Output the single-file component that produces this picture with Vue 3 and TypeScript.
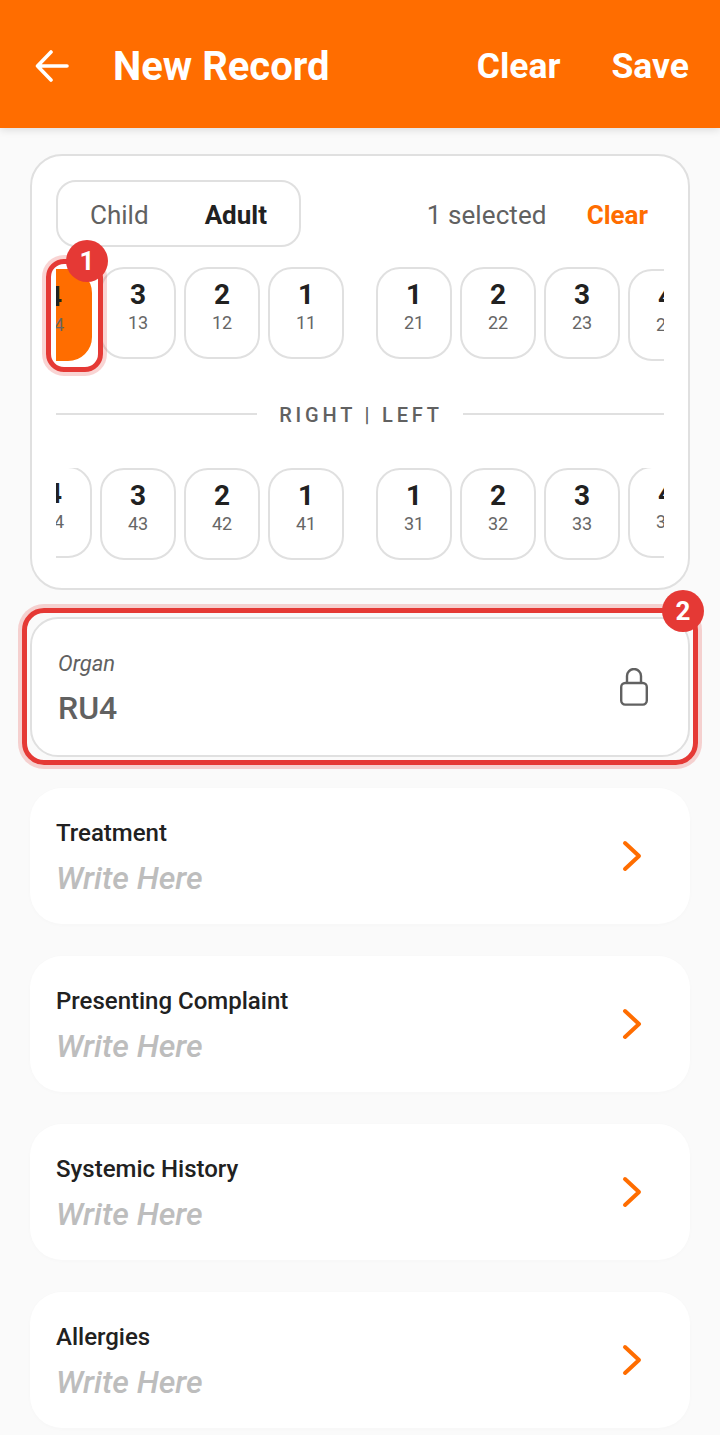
<template>
  <div class="page">
    <header class="app-bar">
      <button type="button" class="back" aria-label="Back">
        <svg width="34" height="34" viewBox="0 0 34 34" fill="none" stroke="#fff" stroke-width="3.6" stroke-linecap="round" stroke-linejoin="round">
          <path d="M32 17H2.5M16 3 2.5 17 16 31" />
        </svg>
      </button>
      <h1 class="title">New Record</h1>
      <span class="bar-action">Clear</span>
      <span class="bar-action save">Save</span>
    </header>

    <main class="content">
      <section class="chart-card">
        <div class="chart-top">
          <div class="toggle">
            <span class="toggle-item">Child</span>
            <span class="toggle-item active">Adult</span>
          </div>
          <span class="selected-count">1 selected</span>
          <span class="clear-link">Clear</span>
        </div>

        <div class="teeth-window upper">
          <div class="teeth-row">
            <template v-for="(quadrant, q) in upperTeeth" :key="q">
              <div class="quadrant">
                <div
                  v-for="tooth in quadrant"
                  :key="tooth.code"
                  class="tooth"
                  :class="{ selected: tooth.code === 14, far: tooth.num === 4 }"
                >
                  <span class="tooth-num">{{ tooth.num }}</span>
                  <span class="tooth-code">{{ tooth.code }}</span>
                </div>
              </div>
            </template>
          </div>
        </div>

        <div class="divider">
          <span class="line"></span>
          <span class="divider-text">RIGHT | LEFT</span>
          <span class="line"></span>
        </div>

        <div class="teeth-window lower">
          <div class="teeth-row">
            <template v-for="(quadrant, q) in lowerTeeth" :key="q">
              <div class="quadrant">
                <div
                  v-for="tooth in quadrant"
                  :key="tooth.code"
                  class="tooth"
                  :class="{ far: tooth.num === 4 }"
                >
                  <span class="tooth-num">{{ tooth.num }}</span>
                  <span class="tooth-code">{{ tooth.code }}</span>
                </div>
              </div>
            </template>
          </div>
        </div>

        <div class="mark mark-tooth">
          <span class="badge badge-tooth">1</span>
        </div>
      </section>

      <div class="organ-wrap">
        <div class="organ-card">
          <div class="organ-text">
            <span class="organ-label">Organ</span>
            <span class="organ-value">RU4</span>
          </div>
          <svg class="lock" width="28" height="38" viewBox="0 0 28 38" fill="none" stroke="#616161" stroke-width="2.4" stroke-linejoin="round">
            <rect x="1.2" y="15" width="25.6" height="21.6" rx="4" />
            <path d="M7 15V8a7 7 0 0 1 14 0v7" />
          </svg>
        </div>
        <div class="mark mark-organ">
          <span class="badge badge-organ">2</span>
        </div>
      </div>

      <div v-for="field in fields" :key="field" class="field-card">
        <div class="field-text">
          <span class="field-label">{{ field }}</span>
          <span class="field-hint">Write Here</span>
        </div>
        <svg class="chevron" width="22" height="34" viewBox="0 0 22 34" fill="none" stroke="#ff6d00" stroke-width="4" stroke-linecap="round" stroke-linejoin="round">
          <path d="M4 4 18 17 4 30" />
        </svg>
      </div>
    </main>
  </div>
</template>

<script setup lang="ts">
interface Tooth {
  num: number
  code: number
}

const makeQuadrant = (prefix: number, nums: number[]): Tooth[] =>
  nums.map((num) => ({ num, code: prefix * 10 + num }))

const upperTeeth: Tooth[][] = [
  makeQuadrant(1, [4, 3, 2, 1]),
  makeQuadrant(2, [1, 2, 3, 4])
]

const lowerTeeth: Tooth[][] = [
  makeQuadrant(4, [4, 3, 2, 1]),
  makeQuadrant(3, [1, 2, 3, 4])
]

const fields = ['Treatment', 'Presenting Complaint', 'Systemic History', 'Allergies']
</script>

<style>
html,
body {
  margin: 0;
  background: #fafafa;
}
</style>

<style scoped>
.page {
  height: 1435px;
  overflow: hidden;
  background: #fafafa;
  font-family: Roboto, "Liberation Sans", sans-serif;
  color: #212121;
}

.app-bar {
  height: 128px;
  box-sizing: border-box;
  display: flex;
  align-items: center;
  padding: 4px 31px 0 35px;
  background: #ff6d00;
  box-shadow: 0 2px 8px rgba(0, 0, 0, 0.12);
  color: #fff;
}

.back {
  display: flex;
  padding: 0;
  border: none;
  background: none;
  margin-right: 44px;
}

.title {
  flex: 1;
  margin: 0;
  font-size: 40px;
  font-weight: 700;
}

.bar-action {
  font-size: 35.5px;
  font-weight: 700;
}

.save {
  margin-left: 51px;
}

.content {
  padding: 26px 30px 0;
}

.chart-card {
  position: relative;
  box-sizing: border-box;
  height: 436px;
  padding: 24px;
  background: #fff;
  border: 2px solid #e0e0e0;
  border-radius: 32px;
}

.chart-top {
  display: flex;
  align-items: center;
  height: 67px;
}

.toggle {
  box-sizing: border-box;
  width: 245px;
  height: 67px;
  display: flex;
  align-items: center;
  justify-content: space-between;
  padding: 2px 32px 0 32px;
  border: 2px solid #e0e0e0;
  border-radius: 20px;
}

.toggle-item {
  font-size: 26px;
  color: #616161;
}

.toggle-item.active {
  font-weight: 700;
  color: #212121;
}

.selected-count {
  margin-left: auto;
  padding-top: 2px;
  font-size: 26px;
  letter-spacing: 0.1px;
  color: #616161;
}

.clear-link {
  margin-left: 40px;
  margin-right: 16px;
  padding-top: 2px;
  font-size: 26px;
  font-weight: 700;
  color: #ff6d00;
}

.teeth-window {
  overflow: hidden;
  height: 96px;
}

.teeth-window.upper {
  margin-top: 20px;
}

.teeth-row {
  display: flex;
  gap: 32px;
  margin-left: -40px;
  width: max-content;
}

.quadrant {
  display: flex;
  gap: 8px;
}

.tooth {
  box-sizing: border-box;
  width: 76px;
  height: 92px;
  display: flex;
  flex-direction: column;
  align-items: center;
  padding-top: 10px;
  border: 2px solid #e0e0e0;
  border-radius: 24px;
  background: #fff;
}

.upper .far {
  margin-top: 2px;
}

.lower .teeth-row {
  align-items: flex-start;
}

.tooth.selected {
  background: #ff6d00;
  border-color: #ff6d00;
}

.tooth-num {
  font-size: 28px;
  line-height: 32px;
  font-weight: 700;
}

.tooth-code {
  margin-top: 1px;
  font-size: 18px;
  line-height: 22px;
  color: #666;
}

.divider {
  display: flex;
  align-items: center;
  gap: 20px;
  height: 24px;
  margin-top: 40px;
  margin-bottom: 41px;
}

.line {
  flex: 1;
  height: 2px;
  margin-top: -2px;
  background: #e0e0e0;
}

.divider-text {
  padding-left: 2px;
  font-size: 20px;
  font-weight: 500;
  letter-spacing: 3.8px;
  color: #616161;
}

.lower .far {
  margin-top: -2px;
}

.mark {
  position: absolute;
  box-sizing: border-box;
  border: 5px solid #e53935;
  box-shadow: 0 0 0 4px rgba(229, 57, 53, 0.22);
  pointer-events: none;
}

.mark-tooth {
  left: 14px;
  top: 103px;
  width: 57px;
  height: 113px;
  border-radius: 18px;
}

.mark-organ {
  inset: -9px -8px -8px -8px;
  border-radius: 22px;
}

.badge {
  position: absolute;
  width: 42px;
  height: 42px;
  display: flex;
  align-items: center;
  justify-content: center;
  border-radius: 50%;
  background: #e53935;
  color: #fff;
  font-size: 26px;
  font-weight: 700;
}

.badge-tooth {
  top: -24px;
  right: -10px;
}

.badge-organ {
  top: -23px;
  right: -11px;
}

.organ-wrap {
  position: relative;
  margin-top: 27px;
}

.organ-card {
  box-sizing: border-box;
  height: 140px;
  display: flex;
  align-items: center;
  justify-content: space-between;
  padding: 0 40px 0 26px;
  background: #fff;
  border: 2px solid #e0e0e0;
  border-radius: 28px;
}

.organ-text,
.field-text {
  display: flex;
  flex-direction: column;
}

.organ-text {
  padding-top: 3px;
}

.field-text {
  padding-top: 4px;
}

.organ-label {
  font-size: 22px;
  font-style: italic;
  color: #616161;
}

.organ-value {
  margin-top: 13px;
  font-size: 32px;
  font-weight: 500;
  color: #616161;
}

.field-card {
  box-sizing: border-box;
  height: 136px;
  display: flex;
  align-items: center;
  justify-content: space-between;
  padding: 0 47px 0 26px;
  margin-top: 32px;
  background: #fff;
  border-radius: 32px;
  box-shadow: 0 1px 4px rgba(0, 0, 0, 0.02);
}

.organ-wrap + .field-card {
  margin-top: 31px;
}

.field-label {
  font-size: 24px;
  font-weight: 500;
  color: #212121;
}

.field-hint {
  margin-top: 12px;
  font-size: 32px;
  font-style: italic;
  font-weight: 500;
  color: #bdbdbd;
}
</style>
